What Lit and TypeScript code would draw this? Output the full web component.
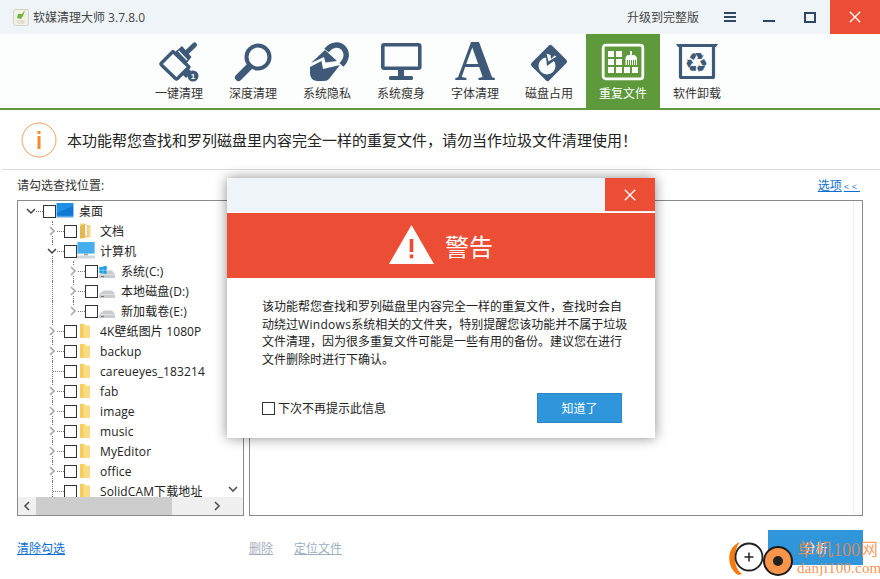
import { LitElement, html, css, svg } from "lit";
import { customElement } from "lit/decorators.js";

type Node = { t: string; l: number; ic: string; ch: "" | "c" | "e"; end?: boolean };

const TREE: Node[] = [
  { t: "桌面", l: 0, ic: "desk", ch: "e" },
  { t: "文档", l: 1, ic: "docs", ch: "c" },
  { t: "计算机", l: 1, ic: "pc", ch: "e" },
  { t: "系统(C:)", l: 2, ic: "win", ch: "c" },
  { t: "本地磁盘(D:)", l: 2, ic: "drive", ch: "c" },
  { t: "新加载卷(E:)", l: 2, ic: "drive", ch: "c", end: true },
  { t: "4K壁纸图片 1080P", l: 1, ic: "folder", ch: "c" },
  { t: "backup", l: 1, ic: "folder", ch: "c" },
  { t: "careueyes_183214", l: 1, ic: "folder", ch: "" },
  { t: "fab", l: 1, ic: "folder", ch: "c" },
  { t: "image", l: 1, ic: "folder", ch: "c" },
  { t: "music", l: 1, ic: "folder", ch: "c" },
  { t: "MyEditor", l: 1, ic: "folder", ch: "c" },
  { t: "office", l: 1, ic: "folder", ch: "c" },
  { t: "SolidCAM下载地址", l: 1, ic: "folder", ch: "" },
];

const TABS = ["一键清理", "深度清理", "系统隐私", "系统瘦身", "字体清理", "磁盘占用", "重复文件", "软件卸载"];
const D = "#3f5a78";

function toolIcon(i: number) {
  switch (i) {
    case 0:
      return svg`
        <path d="M4.500 23 L16 11.500 L32 27 L20.500 38.500 Q19.500 39.500 18.500 38.500 L4.500 25 Q3.500 24 4.500 23 Z" fill="none" stroke="${D}" stroke-width="3.400" stroke-linejoin="round"/>
        <path d="M19 9 L26 3 L35.500 14 L30 21 Z" fill="${D}" transform="translate(-1 3)"/>
        <path d="M27 15 L37.500 5" stroke="${D}" stroke-width="5" stroke-linecap="round"/>
        <path d="M21.500 11 L30 20" stroke="#fcfdfd" stroke-width="1.300"/>
        <circle cx="36" cy="36" r="5.500" fill="${D}"/>
        <path d="M25 34 l6-6 l4 4 l-6 6 z" fill="${D}"/>
        <text x="36" y="39" font-size="8" font-weight="700" fill="#fff" text-anchor="middle" font-family="Liberation Sans, sans-serif">1</text>`;
    case 1:
      return svg`
        <circle cx="27" cy="17" r="11.500" fill="none" stroke="${D}" stroke-width="4"/>
        <path d="M18 27 L7.500 37.500" stroke="${D}" stroke-width="7" stroke-linecap="round"/>`;
    case 2:
      return svg`
        <path d="M21.500 10.500 C26 4.500 34 3 38.500 8 C43 13 41.500 19.500 36.500 25" fill="none" stroke="${D}" stroke-width="5.500"/>
        <path d="M6 23 L20 10 L32 21 L20.500 22.500 L19 17 Z" fill="${D}"/>
        <path d="M5 27 L16.500 21 L18 29 L35 25 L24 39 Q22.500 41 19 41 L12 41 Q5 40 5 33 Z" fill="${D}"/>`;
    case 3:
      return svg`
        <rect x="5.800" y="4.800" width="37" height="23.500" rx="1.500" fill="none" stroke="${D}" stroke-width="3.600" transform="translate(-2 0)"/>
        <rect x="19" y="29" width="6" height="7" fill="${D}"/>
        <rect x="10" y="36" width="24" height="4" rx="1.500" fill="${D}"/>`;
    case 4:
      return svg`<text x="22" y="40" font-family="Liberation Serif, serif" font-weight="700" font-size="56" text-anchor="middle" fill="${D}">A</text>`;
    case 5:
      return svg`
        <rect x="-14.500" y="-12.500" width="29" height="25" rx="2.500" fill="${D}" transform="translate(22 23) rotate(-45)"/>
        <circle cx="20" cy="26" r="8.500" fill="#fcfdfd"/>
        <path d="M20 26 L18.500 13 L31 18 Z" fill="${D}"/>
        <path d="M21.500 21.500 L19.500 13.500 L23.500 15 L24 19 L27.500 15.500 L29.500 16.500 Z" fill="#fcfdfd"/>`;
    case 6: {
      const sq = [
        [7, 11], [15, 11], [7, 19], [15, 19], [7, 27], [15, 27], [23, 27], [31, 27],
      ];
      return svg`
        <rect x="2.200" y="5.200" width="39.600" height="33.600" rx="2.500" fill="none" stroke="#fff" stroke-width="2.800"/>
        ${sq.map(([x, y]) => svg`<rect x="${x}" y="${y}" width="6" height="6" fill="#fff"/>`)}
        <rect x="29" y="11" width="2" height="4" fill="#fff"/>
        <path d="M24.500 18 Q25 15.500 27 15 L33 15 Q35.500 15.500 36 18 L36 25 L35 25 L35 20 L34 20 L34 25 L33 25 L33 20 L32 20 L32 25 L31 25 L31 20 L30 20 L30 25 L29 25 L29 20 L28 20 L28 25 L27 25 L27 20 L26 20 L26 25 L24.500 25 Z" fill="#fff"/>`;
    }
    default:
      return svg`
        <path d="M1 4 H43 L41 7 H3 Z" fill="${D}"/>
        <path d="M5.500 6 V36.500 Q5.500 37.500 6.500 37.500 H37.500 Q38.500 37.500 38.500 36.500 V6" fill="none" stroke="${D}" stroke-width="3.200"/>
        <text x="21.500" y="32" font-family="DejaVu Sans, sans-serif" font-size="27" text-anchor="middle" fill="${D}">♻</text>`;
  }
}

function treeIcon(k: string) {
  switch (k) {
    case "desk":
      return svg`
        <rect x="0.500" y="1" width="17" height="13" fill="#1e90e6"/>
        <path d="M1 11 L17 4 V13.500 H1 Z" fill="#0f78d2"/>
        <rect x="0.500" y="14" width="17" height="1.500" fill="#5aa6dc"/>`;
    case "pc":
      return svg`
        <rect x="0.500" y="0" width="17" height="11.500" fill="#45aef0" stroke="#7cc4ee" stroke-width=".5"/>
        <rect x="7" y="11.500" width="4" height="2" fill="#9aa7b2"/>
        <rect x="0" y="13.500" width="18" height="3" fill="#cfd6dc"/>`;
    case "docs":
      return svg`
        <path d="M3 1.500 H8 L9 3 H13.500 V15.500 H3 Z" fill="#f6d67a"/>
        <rect x="7.500" y="3" width="3" height="11" fill="#f4f2ea" stroke="#b5b09a" stroke-width=".4"/>
        <path d="M3 4 L8 2 V16 L3 16.500 Z" fill="#e3b94f"/>`;
    case "win":
      return svg`
        <path d="M1.500 5.200 L4.700 4.700 V7.800 H1.500 Z M5.300 4.600 L8.500 4 V7.800 H5.300 Z M1.500 8.400 H4.700 V11.400 L1.500 11 Z M5.300 8.400 H8.500 V12 L5.300 11.500 Z" fill="#18a0e8"/>
        <path d="M1 12.500 L6 8.500 H14 L17 12 V16 H1 Z" fill="#c9cccf"/>
        <path d="M1.500 5.200 L4.700 4.700 V7.800 H1.500 Z M5.300 4.600 L8.500 4 V7.800 H5.300 Z M1.500 8.400 H4.700 V11.400 L1.500 11 Z M5.300 8.400 H8.500 V12 L5.300 11.500 Z" fill="#18a0e8"/>
        <path d="M1 12.500 H17 V13 H1 Z" fill="#f2f3f4"/>
        <rect x="3" y="14" width="3" height="1" fill="#6f7478"/>`;
    case "drive":
      return svg`
        <path d="M1 12 L6 8.500 H14 L17 12 V16 H1 Z" fill="#c9cccf"/>
        <path d="M1 12 H17 V12.600 H1 Z" fill="#f2f3f4"/>
        <rect x="3" y="14" width="3" height="1" fill="#6f7478"/>`;
    default:
      return svg`
        <path d="M3 2 H8 L9 3.500 H13 V16 H3 Z" fill="#fbdc83"/>
        <path d="M3 2 H6.500 V16 H3 Z" fill="#f7cc5f"/>`;
  }
}

@customElement("app-root")
export class AppRoot extends LitElement {
  static styles = css`
    :host {
      display: block;
      position: relative;
      width: 880px;
      height: 579px;
      overflow: hidden;
      background: #fff;
      font-family: "Open Sans", "Noto Sans CJK SC", sans-serif;
      font-size: 12px;
      color: #333;
    }
    .titlebar { height: 34px; background: #eff4f9; display: flex; align-items: center; }
    .logo { margin-left: 13px; width: 16px; height: 17px; }
    .apptitle { margin-left: 4px; color: #444; }
    .upgrade { margin-left: auto; margin-right: 11px; color: #444; }
    .ctl { height: 34px; width: 40px; display: flex; align-items: center; justify-content: center; }
    .bars { width: 12px; height: 10px; display: flex; flex-direction: column; justify-content: space-between; }
    .bars i { display: block; height: 2px; background: #2f4763; }
    .min { width: 12px; height: 2px; background: #2f4763; margin-top: 8px; margin-left: -3px; }
    .max { width: 12px; height: 11px; box-sizing: border-box; border: 2px solid #2f4763; }
    .close { width: 50px; height: 34px; background: #ec4e35; display: flex; align-items: center; justify-content: center; }

    .toolbar { height: 74px; background: #fcfdfd; border-bottom: 2px solid #5e9a3c; padding-left: 142px; display: flex; }
    .tab { width: 74px; display: flex; flex-direction: column; align-items: center; padding-top: 6px; box-sizing: border-box; color: #333; }
    .tab svg { width: 44px; height: 44px; display: block; }
    .tab span { margin-top: 2px; line-height: 16px; }
    .tab.on { background: #5e9a3c; color: #fff; }

    .notice { height: 59px; border-bottom: 1px solid #dedede; margin-left: 2px; padding-left: 19px; display: flex; align-items: center; gap: 10px; font-size: 15px; color: #222; }
    .notice svg { width: 36px; height: 36px; }

    .label { height: 30px; padding: 0 20px 0 17px; display: flex; align-items: center; justify-content: space-between; color: #333; }
    .label a, .clear { color: #0a6fd0; text-decoration: underline; }
    .label a small { font-size: 9px; letter-spacing: 3px; margin-left: 2px; }

    .panels { display: flex; gap: 5px; padding: 0 17px; height: 316px; }
    .tree { width: 227px; box-sizing: border-box; border: 1px solid #8a8a8a; position: relative; display: grid; grid-template-columns: 208px 17px; grid-template-rows: 296px 18px; background: #fff; }
    .rows { overflow: hidden; }
    .row { height: 20px; position: relative; display: flex; align-items: center; color: #222; white-space: nowrap; letter-spacing: .12px; }
    .v { position: absolute; top: 0; bottom: 0; width: 0; border-left: 1px dotted #777; }
    .v.half { bottom: 10px; }
    .h { position: absolute; top: 10px; height: 0; border-top: 1px dotted #777; }
    .chev { position: absolute; top: 5px; width: 10px; height: 10px; background: #fff; }
    .chev svg { display: block; width: 10px; height: 10px; }
    .cb { width: 13px; height: 13px; box-sizing: border-box; border: 1px solid #333; background: #fff; flex: none; }
    .ticon { width: 18px; height: 18px; flex: none; margin-right: 5px; }
    .vbar { display: flex; flex-direction: column; justify-content: flex-end; align-items: center; padding: 0 3px 3px 0; box-sizing: border-box; }
    .hbar { grid-column: 1 / 3; background: #f0f0f0; display: flex; align-items: center; }
    .hbar svg { width: 10px; height: 10px; flex: none; }
    .thumb { width: 136px; height: 18px; background: #cdcdcd; margin-left: 4px; }
    .sp { flex: 1; }
    .results { flex: 1; box-sizing: border-box; border: 1px solid #8a8a8a; display: flex; justify-content: flex-end; padding-right: 8px; }
    .results i { display: block; width: 1px; background: #e8eef8; margin: 1px 0; }

    .bottom { display: flex; align-items: flex-start; padding: 14px 17px 0; }
    .bottom .l1 { width: 232px; padding-top: 11px; line-height: 16px; }
    .muted { color: #a4aebb; text-decoration: underline; line-height: 16px; padding-top: 11px; }
    .muted.b { margin-left: 21px; color: #9cb0c4; }
    .go { margin-left: auto; width: 95px; height: 35px; background: #2f96dc; color: #fff; display: flex; align-items: center; justify-content: center; }

    .dialog { position: absolute; left: 227px; top: 178px; width: 428px; height: 260px; background: #fff; box-shadow: 0 0 12px rgba(0, 0, 0, .45); display: flex; flex-direction: column; }
    .dhead { height: 34px; background: #eff4f9; display: flex; justify-content: flex-end; }
    .dclose { width: 50px; height: 33px; background: #ec4e35; display: flex; align-items: center; justify-content: center; }
    .dband { margin-top: 1px; height: 65px; background: #ec4e35; display: flex; align-items: center; color: #fff; font-size: 24px; padding-left: 162px; gap: 11px; }
    .dband svg { width: 45px; height: 40px; margin-top: -1px; }
    .dtext { padding: 20px 0 0 35px; line-height: 17.5px; color: #222; white-space: nowrap; }
    .dtext span { letter-spacing: .3px; }
    .dfoot { display: flex; align-items: center; padding: 0 33px 0 35px; margin-top: 25px; height: 30px; color: #222; }
    .dfoot .cb { margin-right: 3px; }
    .ok { margin-left: auto; width: 85px; height: 30px; box-sizing: border-box; background: #2f96dc; border: 1px solid #2a86c5; color: #fff; font-size: 12px; display: flex; align-items: center; justify-content: center; }

    .mark { position: absolute; left: 728px; top: 535px; width: 150px; height: 44px; pointer-events: none; }
    .mark svg { position: absolute; left: 0; top: 0; width: 70px; height: 44px; }
    .m1 { position: absolute; left: 69px; top: 3px; font-family: "Liberation Serif", "Noto Sans CJK SC", serif; font-size: 18px; line-height: 24px; color: rgba(246, 136, 62, .8); white-space: nowrap; }
    .m2 { position: absolute; left: 69px; top: 24px; font-family: "Liberation Serif", serif; font-size: 15px; line-height: 18px; letter-spacing: .2px; color: rgba(246, 136, 62, .9); white-space: nowrap; }
  `;

  private x(size: number, color: string) {
    return html`<svg width="${size}" height="${size}" viewBox="0 0 12 12"><path d="M.8 .8 L11.2 11.2 M11.2 .8 L.8 11.2" stroke="${color}" stroke-width="1.300" fill="none"/></svg>`;
  }

  private row(n: Node) {
    const vx = 13 + 21 * n.l;
    const cbx = 25 + 21 * n.l;
    return html`<div class="row">
      ${n.l >= 2 ? html`<span class="v" style="left:34px"></span>` : ""}
      ${n.l >= 1 ? html`<span class="v ${n.end ? "half" : ""}" style="left:${vx}px"></span>` : ""}
      <span class="h" style="left:${vx + 1}px;width:${cbx - vx - 1}px"></span>
      ${n.ch
        ? html`<span class="chev" style="left:${vx - 5}px"><svg viewBox="0 0 10 10">
            ${n.ch === "e"
              ? svg`<path d="M1 3 L5 7 L9 3" fill="none" stroke="#444" stroke-width="1.500"/>`
              : svg`<path d="M3 1 L7 5 L3 9" fill="none" stroke="#aaa" stroke-width="1.700"/>`}
          </svg></span>`
        : ""}
      <span class="cb" style="margin-left:${cbx}px"></span>
      <svg class="ticon" viewBox="0 0 18 18">${treeIcon(n.ic)}</svg>
      <span>${n.t}</span>
    </div>`;
  }

  render() {
    return html`
      <div class="titlebar">
        <svg class="logo" viewBox="0 0 16 17">
          <rect x=".5" y=".5" width="15" height="16" rx="2" fill="#f3f1e6" stroke="#d5d3c8"/>
          <path d="M12 1 L9 5 L5 5 L4 9 L8 10 L10 7 Z" fill="#6db33f"/>
          <path d="M3 11 L12 11 L11 15 L5 15 Z" fill="#e3e0d2"/>
        </svg>
        <span class="apptitle">软媒清理大师 3.7.8.0</span>
        <span class="upgrade">升级到完整版</span>
        <div class="ctl"><div class="bars"><i></i><i></i><i></i></div></div>
        <div class="ctl"><div class="min"></div></div>
        <div class="ctl"><div class="max"></div></div>
        <div class="close">${this.x(12, "#fff")}</div>
      </div>

      <div class="toolbar">
        ${TABS.map(
          (t, i) => html`<div class="tab ${i === 6 ? "on" : ""}">
            <svg viewBox="0 0 44 44">${toolIcon(i)}</svg>
            <span>${t}</span>
          </div>`
        )}
      </div>

      <div class="notice">
        <svg viewBox="0 0 36 36">
          <circle cx="18" cy="18" r="17" fill="none" stroke="#f4a05f" stroke-width="1"/>
          <rect x="16.500" y="9" width="3" height="3" fill="#f58a2e"/>
          <rect x="16.500" y="14" width="3" height="13" fill="#f58a2e"/>
        </svg>
        <span>本功能帮您查找和罗列磁盘里内容完全一样的重复文件，请勿当作垃圾文件清理使用！</span>
      </div>

      <div class="label">
        <span>请勾选查找位置:</span>
        <a>选项<small>&lt;&lt;</small></a>
      </div>

      <div class="panels">
        <div class="tree">
          <div class="rows">${TREE.map((n) => this.row(n))}</div>
          <div class="vbar">
            <svg width="10" height="10" viewBox="0 0 10 10"><path d="M1 3 L5 7 L9 3" fill="none" stroke="#555" stroke-width="1.700"/></svg>
          </div>
          <div class="hbar">
            <svg style="margin-left:4px" viewBox="0 0 10 10"><path d="M7 1 L3 5 L7 9" fill="none" stroke="#555" stroke-width="1.700"/></svg>
            <div class="thumb"></div>
            <div class="sp"></div>
            <svg style="margin-right:21px" viewBox="0 0 10 10"><path d="M3 1 L7 5 L3 9" fill="none" stroke="#555" stroke-width="1.700"/></svg>
          </div>
        </div>
        <div class="results"><i></i></div>
      </div>

      <div class="bottom">
        <div class="l1"><a class="clear">清除勾选</a></div>
        <a class="muted">删除</a>
        <a class="muted b">定位文件</a>
        <div class="go">分析</div>
      </div>

      <div class="dialog">
        <div class="dhead"><div class="dclose">${this.x(12, "#fff")}</div></div>
        <div class="dband">
          <svg viewBox="0 0 45 40">
            <path d="M22.500 0 L45 39 H0 Z" fill="#fdfdfd"/>
            <rect x="20.700" y="14" width="3.600" height="13" fill="#ec4e35"/>
            <rect x="20.700" y="29.500" width="3.600" height="3.800" fill="#ec4e35"/>
          </svg>
          <span>警告</span>
        </div>
        <div class="dtext">
          该功能帮您查找和罗列磁盘里内容完全一样的重复文件，查找时会自<br />
          动绕过<span>Windows</span>系统相关的文件夹，特别提醒您该功能并不属于垃圾<br />
          文件清理，因为很多重复文件可能是一些有用的备份。建议您在进行<br />
          文件删除时进行下确认。
        </div>
        <div class="dfoot">
          <span class="cb"></span><span>下次不再提示此信息</span>
          <div class="ok">知道了</div>
        </div>
      </div>

      <div class="mark">
        <svg viewBox="0 0 70 44">
          <path d="M10 40 C-2 32 -2 12 12 7 C6 14 4 32 14 39 Z" fill="#f57a10"/>
          <circle cx="21" cy="22" r="13.500" fill="#fff" fill-opacity=".9" stroke="#222" stroke-width="1.800"/>
          <path d="M16.500 22 H25.500 M21 17.500 V26.500" stroke="#222" stroke-width="1.500"/>
          <circle cx="50" cy="26" r="14" fill="#f9954b" stroke="#1b1b1b" stroke-width="2"/>
          <circle cx="50" cy="26" r="5" fill="#222"/>
        </svg>
        <div class="m1">单机100网</div>
        <div class="m2">danji100.com</div>
      </div>
    `;
  }
}
